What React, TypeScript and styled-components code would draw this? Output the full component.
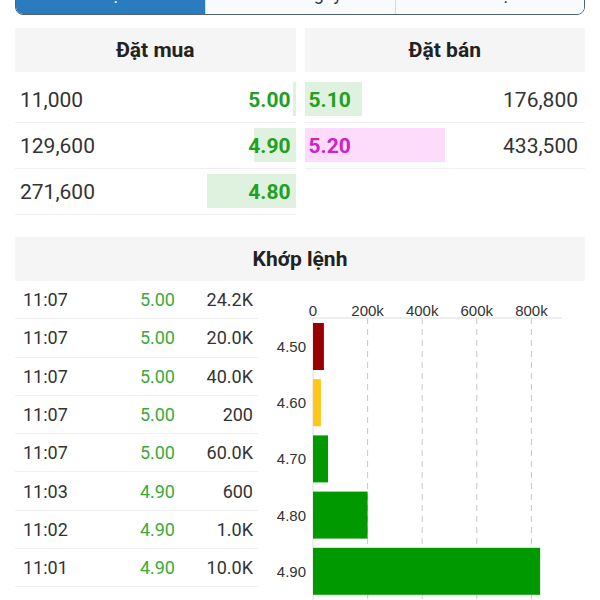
import React from "react";
import styled, { createGlobalStyle } from "styled-components";

const GlobalStyle = createGlobalStyle`
  html, body { margin: 0; padding: 0; background: #fff; }
  body {
    font-family: Roboto, "Noto Sans", "Liberation Sans", sans-serif;
    color: #333;
    overflow: hidden;
  }
  * { box-sizing: border-box; }
`;

const Page = styled.div`
  padding: 0 15px;
`;

const TabBar = styled.div`
  margin-top: -29px;
  height: 44px;
  display: grid;
  grid-template-columns: repeat(3, 1fr);
  border: 1.5px solid #4d6275;
  border-radius: 8px;
  overflow: hidden;
`;

const Tab = styled.div<{ $active?: boolean }>`
  display: flex;
  align-items: center;
  justify-content: center;
  font-size: 18px;
  background: ${(p) => (p.$active ? "#2b7bbf" : "#f8fafc")};
  color: ${(p) => (p.$active ? "#fff" : "#333")};
  & + & {
    border-left: 1px solid #d3dae1;
  }
`;

const OrderBook = styled.div`
  margin-top: 13px;
  display: grid;
  grid-template-columns: 1fr 1fr;
  column-gap: 9px;
`;

const Side = styled.div`
  display: flex;
  flex-direction: column;
`;

const SectionHeader = styled.div`
  height: 44px;
  background: #f5f5f5;
  display: flex;
  align-items: center;
  justify-content: center;
  font-weight: 700;
  font-size: 21px;
  color: #222;
`;

const SideHeader = styled(SectionHeader)`
  margin-bottom: 5px;
`;

const BookRow = styled.div<{ $pad: string }>`
  position: relative;
  height: 46px;
  border-bottom: 1px solid #efefef;
  display: flex;
  align-items: center;
  justify-content: space-between;
  padding: ${(p) => p.$pad};
  font-size: 21px;
`;

const Bar = styled.div<{ $side: "left" | "right"; $color: string }>`
  position: absolute;
  top: 5px;
  bottom: 6px;
  ${(p) => (p.$side === "left" ? "right: 0;" : "left: 0;")}
  background: ${(p) => p.$color};
`;

const Qty = styled.span`
  position: relative;
  color: #333;
`;

const BookPrice = styled.span<{ $color: string }>`
  position: relative;
  font-weight: 700;
  color: ${(p) => p.$color};
`;

const MatchSection = styled.div`
  margin-top: 22px;
`;

const MatchBody = styled.div`
  display: grid;
  grid-template-columns: 243px 1fr;
`;

const TradeList = styled.div`
  display: flex;
  flex-direction: column;
`;

const TradeRow = styled.div`
  height: 38.3px;
  border-bottom: 1px solid #efefef;
  display: grid;
  grid-template-columns: 1fr 70px 78px;
  align-items: center;
  padding: 0 5px 0 8px;
  font-size: 18px;
`;

const Time = styled.span`
  color: #333;
`;

const TradePrice = styled.span`
  text-align: right;
  color: #3aaa3a;
`;

const Volume = styled.span`
  text-align: right;
  color: #333;
`;

const ChartBox = styled.div`
  padding-left: 0;
`;

const GREEN_BAR = "#dff2df";
const PINK_BAR = "#fcdcfa";
const GREEN = "#22a022";
const MAGENTA = "#cc22c6";

const bids = [
  { qty: "11,000", price: "5.00", bar: 3 },
  { qty: "129,600", price: "4.90", bar: 42 },
  { qty: "271,600", price: "4.80", bar: 89 },
];

const asks = [
  { qty: "176,800", price: "5.10", bar: 57, color: GREEN, barColor: GREEN_BAR },
  { qty: "433,500", price: "5.20", bar: 140, color: MAGENTA, barColor: PINK_BAR },
];

const trades = [
  ["11:07", "5.00", "24.2K"],
  ["11:07", "5.00", "20.0K"],
  ["11:07", "5.00", "40.0K"],
  ["11:07", "5.00", "200"],
  ["11:07", "5.00", "60.0K"],
  ["11:03", "4.90", "600"],
  ["11:02", "4.90", "1.0K"],
  ["11:01", "4.90", "10.0K"],
  ["10:59", "4.90", "1.0K"],
];

const volumes = [
  { label: "4.50", value: 40000, color: "#990000" },
  { label: "4.60", value: 29000, color: "#ffc61a" },
  { label: "4.70", value: 55000, color: "#009900" },
  { label: "4.80", value: 200000, color: "#009900" },
  { label: "4.90", value: 832000, color: "#009900" },
];

const VolumeChart: React.FC = () => {
  const x0 = 55;
  const axisY = 37;
  const unit = 54.6 / 200000;
  const ticks = [0, 200000, 400000, 600000, 800000];
  const font = "'Liberation Sans', Arial, sans-serif";
  return (
    <svg width="327" height="330" viewBox="0 0 327 330">
      {ticks.map((t, i) => {
        const x = x0 + t * unit;
        return (
          <g key={t}>
            <text
              x={x}
              y={35}
              textAnchor="middle"
              fontSize="15"
              fill="#333"
              fontFamily={font}
            >
              {t === 0 ? "0" : `${t / 1000}k`}
            </text>
            {i > 0 && (
              <line
                x1={x}
                y1={axisY}
                x2={x}
                y2={330}
                stroke="#c8c8c8"
                strokeWidth="1"
                strokeDasharray="6 5"
              />
            )}
          </g>
        );
      })}
      <line x1={x0} y1={axisY} x2={304} y2={axisY} stroke="#dcdcdc" strokeWidth="1" />
      <line x1={x0} y1={axisY} x2={x0} y2={330} stroke="#dcdcdc" strokeWidth="1" />
      {volumes.map((v, i) => {
        const y = 42 + i * 56.2;
        return (
          <g key={v.label}>
            <rect x={x0} y={y} width={Math.max(v.value * unit, 2)} height={47} fill={v.color} />
            <text
              x={48}
              y={y + 29}
              textAnchor="end"
              fontSize="15"
              fill="#333"
              fontFamily={font}
            >
              {v.label}
            </text>
          </g>
        );
      })}
    </svg>
  );
};

export default function App() {
  return (
    <>
      <GlobalStyle />
      <Page>
        <TabBar>
          <Tab $active>Sổ lệnh</Tab>
          <Tab>Theo ngày</Tab>
          <Tab>Giao dịch</Tab>
        </TabBar>

        <OrderBook>
          <Side>
            <SideHeader>Đặt mua</SideHeader>
            {bids.map((b) => (
              <BookRow key={b.qty} $pad="0 5px 0 5px">
                <Bar $side="left" $color={GREEN_BAR} style={{ width: b.bar }} />
                <Qty>{b.qty}</Qty>
                <BookPrice $color={GREEN}>{b.price}</BookPrice>
              </BookRow>
            ))}
          </Side>
          <Side>
            <SideHeader>Đặt bán</SideHeader>
            {asks.map((a) => (
              <BookRow key={a.qty} $pad="0 7px 0 4px">
                <Bar $side="right" $color={a.barColor} style={{ width: a.bar }} />
                <BookPrice $color={a.color}>{a.price}</BookPrice>
                <Qty>{a.qty}</Qty>
              </BookRow>
            ))}
          </Side>
        </OrderBook>

        <MatchSection>
          <SectionHeader>Khớp lệnh</SectionHeader>
          <MatchBody>
            <TradeList>
              {trades.map((t, i) => (
                <TradeRow key={i}>
                  <Time>{t[0]}</Time>
                  <TradePrice>{t[1]}</TradePrice>
                  <Volume>{t[2]}</Volume>
                </TradeRow>
              ))}
            </TradeList>
            <ChartBox>
              <VolumeChart />
            </ChartBox>
          </MatchBody>
        </MatchSection>
      </Page>
    </>
  );
}
